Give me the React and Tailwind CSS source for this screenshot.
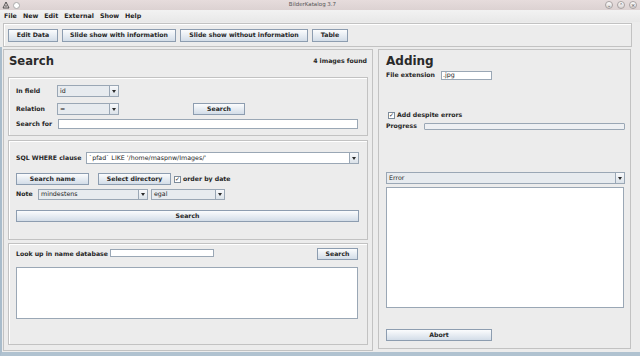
import React from "react";

function Btn({ children, className = "" }) {
  return (
    <div
      className={`flex items-center justify-center border border-[#8d9db0] bg-linear-to-b from-[#fbfcfd] to-[#d3dde8] text-[6.2px] font-bold text-[#262626] leading-none ${className}`}
    >
      {children}
    </div>
  );
}

function Arrow() {
  return (
    <div className="w-[9px] border-l border-[#9aa7b5] bg-linear-to-b from-[#f8f9fb] to-[#dbe2e9] flex items-center justify-center">
      <div className="w-0 h-0 border-l-[2.5px] border-r-[2.5px] border-t-[3px] border-l-transparent border-r-transparent border-t-[#2a2a2a]" />
    </div>
  );
}

function Combo({ value, className = "", bg = "bg-[#e7ebef]" }) {
  return (
    <div className={`flex items-stretch border border-[#9aa7b5] ${bg} ${className}`}>
      <div className="flex-1 flex items-center pl-[2px] text-[6.3px] text-[#222] leading-none overflow-hidden whitespace-nowrap">
        {value}
      </div>
      <Arrow />
    </div>
  );
}

function Check({ label }) {
  return (
    <div className="flex items-center gap-[2px]">
      <div className="w-[7px] h-[7px] border border-[#7d8b9a] bg-white flex items-center justify-center text-[6px] leading-none text-[#222]">
        ✓
      </div>
      <span className="text-[6.2px] font-bold text-[#262626] leading-none">{label}</span>
    </div>
  );
}

function Label({ children, className = "" }) {
  return <span className={`text-[6.2px] font-bold text-[#262626] leading-none whitespace-nowrap ${className}`}>{children}</span>;
}

function Group({ children, className = "" }) {
  return (
    <div className={`border border-[#c2c2c2] shadow-[inset_1px_1px_0_#ffffff] ${className}`}>{children}</div>
  );
}

function Circle({ children }) {
  return (
    <div className="w-[8px] h-[8px] rounded-full border border-[#a9a2a2] bg-linear-to-b from-white to-[#d8d2d2] flex items-center justify-center text-[5px] leading-none text-[#444]">
      {children}
    </div>
  );
}

export default function App() {
  return (
    <div className="w-[640px] h-[356px] bg-[#ececec] overflow-hidden flex flex-col font-['DejaVu_Sans',sans-serif] text-[#222] leading-none">
      {/* title bar */}
      <div className="h-[10px] bg-linear-to-b from-[#e6dcdc] to-[#dcd2d2] flex items-center px-[2px]">
        <div className="flex items-center gap-[3px]">
          <svg width="8" height="8" viewBox="0 0 8 8">
            <path d="M1 7 L4 1 L7 7 Z M3 5 H5" fill="none" stroke="#333" strokeWidth="0.8" />
          </svg>
          <div className="w-[7px] h-[7px] rounded-full border border-[#aaa] bg-white" />
        </div>
        <div className="flex-1 text-center text-[5.5px] text-[#555] leading-none">BilderKatalog 3.7</div>
        <div className="flex items-center gap-[4px] pr-[1px]">
          <Circle>⌄</Circle>
          <Circle>⌃</Circle>
          <Circle>×</Circle>
        </div>
      </div>
      {/* menu */}
      <div className="h-[12px] flex items-center gap-[6px] pl-[4px] bg-linear-to-b from-[#f2f2f2] to-[#e8e8e8]">
        {["File", "New", "Edit", "External", "Show", "Help"].map((m) => (
          <span key={m} className="text-[6.3px] font-bold text-[#222] leading-none">{m}</span>
        ))}
      </div>
      {/* toolbar */}
      <div className="ml-[3px] mt-[1px] h-[24px] border border-[#c2c2c2] shadow-[inset_1px_1px_0_#ffffff] flex items-center gap-[4px] pl-[4px] mr-[8px]">
        <Btn className="w-[50px] h-[13px]">Edit Data</Btn>
        <Btn className="w-[114px] h-[13px]">Slide show with information</Btn>
        <Btn className="w-[128px] h-[13px]">Slide show without information</Btn>
        <Btn className="w-[36px] h-[13px]">Table</Btn>
      </div>
      {/* main */}
      <div className="flex-1 flex gap-[5px] pt-[2px] pl-[1px] border-l-[2px] border-l-[#a9bccb] border-b-[4px] border-b-[#b0c2d0]">
        {/* left panel */}
        <div className="w-[370px] border border-[#c2c2c2] flex flex-col px-[4px] pb-[5px] mb-[1px]">
          <div className="h-[27px] pb-[4px] flex items-center justify-between pl-[1px] pr-[1px]">
            <span className="text-[11.6px] font-bold text-[#2a2a2a] leading-none">Search</span>
            <Label>4 images found</Label>
          </div>
          <Group className="h-[59px] flex flex-col pl-[7px] pr-[9px] pt-[7px]">
            <div className="flex items-center h-[12px]">
              <Label className="w-[41px]">In field</Label>
              <Combo value="id" className="w-[62px] h-[12px]" />
            </div>
            <div className="flex items-center h-[12px] mt-[6px]">
              <Label className="w-[41px]">Relation</Label>
              <Combo value="=" className="w-[62px] h-[12px]" />
              <Btn className="w-[52px] h-[12px] ml-[74px]">Search</Btn>
            </div>
            <div className="flex items-center h-[10px] mt-[4px]">
              <Label className="w-[42px]">Search for</Label>
              <div className="flex-1 h-[10px] border border-[#9aa7b5] bg-white" />
            </div>
          </Group>
          <Group className="h-[100px] mt-[4px] flex flex-col pl-[7px] pr-[8px] pt-[11px]">
            <div className="flex items-center h-[12px]">
              <Label className="w-[70px]">SQL WHERE clause</Label>
              <Combo value="`pfad` LIKE '/home/maspnw/Images/'" bg="bg-white" className="flex-1 h-[12px]" />
            </div>
            <div className="flex items-center h-[12px] mt-[9px]">
              <Btn className="w-[73px] h-[12px]">Search name</Btn>
              <Btn className="w-[73px] h-[12px] ml-[9px]">Select directory</Btn>
              <div className="ml-[3px]"><Check label="order by date" /></div>
            </div>
            <div className="flex items-center h-[11px] mt-[4px]">
              <Label className="w-[22px]">Note</Label>
              <Combo value="mindestens" className="w-[110px] h-[11px]" />
              <Combo value="egal" className="w-[74px] h-[11px] ml-[3px]" />
            </div>
            <Btn className="h-[12px] mt-[10px] w-full">Search</Btn>
          </Group>
          <Group className="flex-1 mt-[3px] flex flex-col pl-[7px] pr-[9px] pt-[4px]">
            <div className="flex items-center h-[12px]">
              <Label>Look up in name database</Label>
              <div className="w-[104px] h-[8px] border border-[#9aa7b5] bg-white ml-[2px] mt-[-2px]" />
              <div className="flex-1" />
              <Btn className="w-[41px] h-[12px]">Search</Btn>
            </div>
            <div className="h-[52px] mt-[7px] border border-[#9aa7b5] bg-white" />
          </Group>
        </div>
        {/* right panel */}
        <div className="w-[253px] border border-[#c2c2c2] flex flex-col pl-[7px] pr-[5px] mb-[3px]">
          <div className="pt-[2px] h-[20px] leading-none">
            <span className="text-[12px] font-bold text-[#2a2a2a] leading-none">Adding</span>
          </div>
          <div className="flex items-center h-[10px]">
            <Label className="w-[55px]">File extension</Label>
            <div className="w-[51px] h-[9px] border border-[#9aa7b5] bg-white text-[6.3px] leading-none pl-[1px] flex items-center">.jpg</div>
          </div>
          <div className="h-[31px]" />
          <div className="pl-[2px] h-[8px] flex items-center"><Check label="Add despite errors" /></div>
          <div className="flex items-center h-[8px] mt-[3px]">
            <Label className="w-[38px]">Progress</Label>
            <div className="flex-1 h-[7px] border border-[#9aa7b5] bg-[#eef0f3] rounded-[1px]" />
          </div>
          <div className="h-[42px]" />
          <Combo value="Error" className="h-[12px] w-[239px]" />
          <div className="h-[121px] w-[238px] mt-[3px] border border-[#9aa7b5] bg-white" />
          <div className="h-[21px]" />
          <Btn className="w-[106px] h-[12px]">Abort</Btn>
        </div>
      </div>
    </div>
  );
}
